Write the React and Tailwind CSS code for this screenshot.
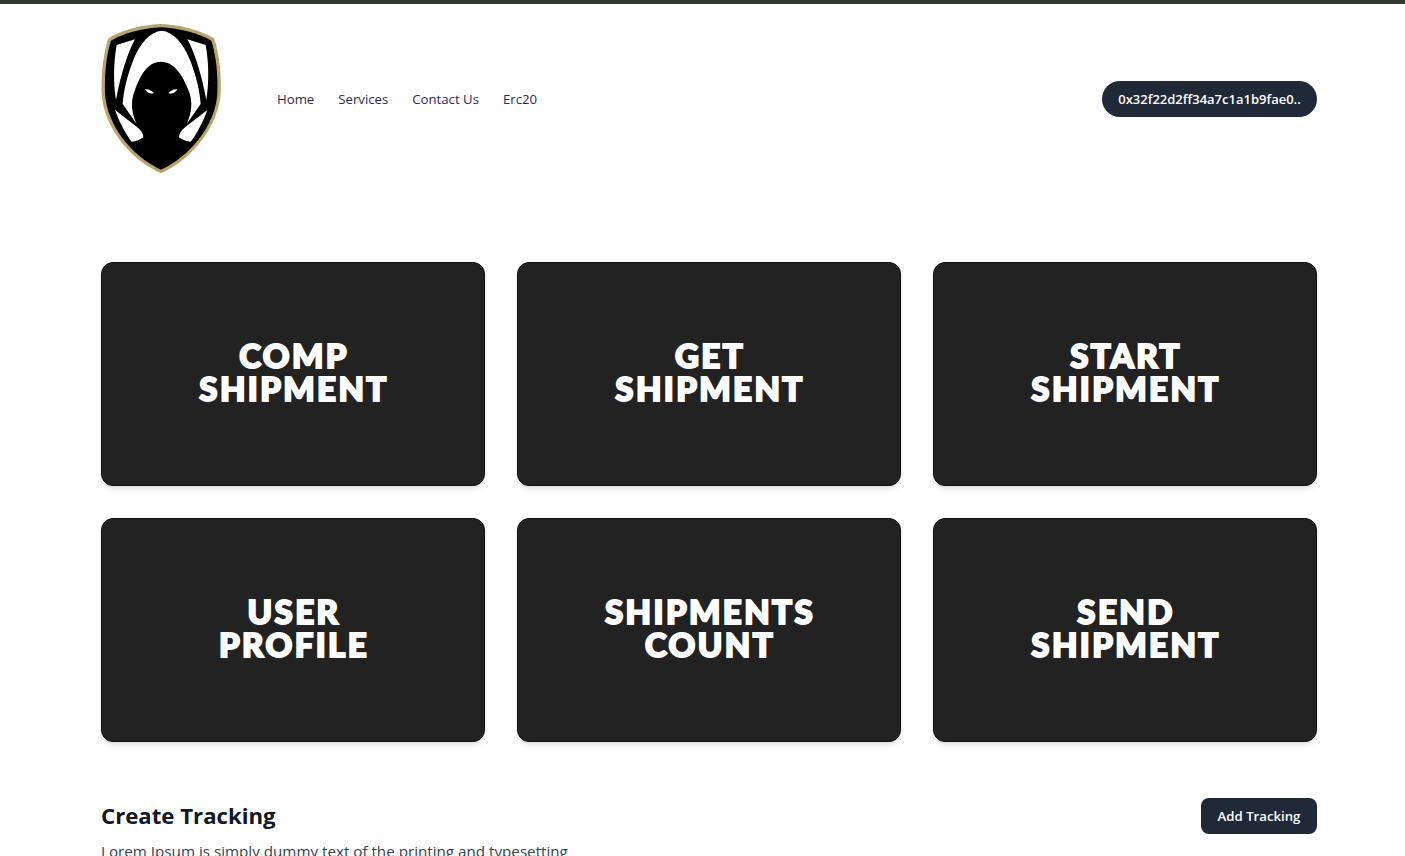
import React from "react";

const cards = [
  ["COMP", "SHIPMENT"],
  ["GET", "SHIPMENT"],
  ["START", "SHIPMENT"],
  ["USER", "PROFILE"],
  ["SHIPMENTS", "COUNT"],
  ["SEND", "SHIPMENT"],
];

function Logo() {
  return (
    <svg viewBox="33 42 360 450" className="w-[120px] h-[150px] shrink-0">
      <path
        d="M213 42C150 45 95 60 55 85C40 130 33 190 35 250C40 350 120 450 213 490C305 450 385 350 392 250C394 190 388 130 372 85C330 60 275 45 213 42Z"
        fill="#b9a46e"
      />
      <path
        d="M213 52C155 55 103 69 63 92C49 135 43 190 45 250C50 345 125 440 213 479C300 440 377 345 382 250C384 190 378 135 364 92C323 69 271 55 213 52Z"
        fill="#000"
      />
      <path
        d="M215 62C180 65 150 100 130 150C112 195 100 245 98 282L140 342C125 310 120 275 135 240C150 200 170 155 213 155C255 155 280 200 295 240C310 275 305 310 290 342L332 282C330 245 318 195 300 150C280 100 250 65 215 62Z"
        fill="#fff"
      />
      <path d="M80 105L135 88C112 130 92 195 78 270C70 220 70 160 80 105Z" fill="#fff" />
      <path d="M347 105L292 88C315 130 335 195 349 270C357 220 357 160 347 105Z" fill="#fff" />
      <path d="M75 300L140 350C152 360 160 370 160 382C150 390 135 395 125 395C105 370 88 335 75 300Z" fill="#fff" />
      <path d="M352 300L287 350C275 360 267 370 267 382C277 390 292 395 302 395C322 370 339 335 352 300Z" fill="#fff" />
      <path d="M165 238C175 236 185 242 192 249C182 253 172 250 165 238Z" fill="#fff" />
      <path d="M262 238C252 236 242 242 235 249C245 253 255 250 262 238Z" fill="#fff" />
    </svg>
  );
}

export default function App() {
  return (
    <div className="h-screen overflow-hidden bg-white font-['Open_Sans','Noto_Sans',sans-serif] border-t-4 border-[#2f3a2e]">
      <div className="ml-[101px] w-[1216px]">
        <header className="flex items-center justify-between pt-5">
          <div className="flex items-center gap-14">
            <Logo />
            <nav className="flex items-center gap-6 pt-px text-[13.2px] text-[#2e2a4f]">
              <a>Home</a>
              <a>Services</a>
              <a>Contact Us</a>
              <a>Erc20</a>
            </nav>
          </div>
          <button className="h-9 w-[215px] rounded-full bg-[#1f2937] pt-px text-white text-[13px] font-semibold">
            0x32f22d2ff34a7c1a1b9fae0..
          </button>
        </header>

        <div className="grid grid-cols-3 gap-8 mt-[88px]">
          {cards.map((card) => (
            <div
              key={card.join(" ")}
              className="h-[224px] rounded-xl bg-[#222222] border border-[#111111] shadow-md flex flex-col items-center justify-center pb-1 pl-[2px] text-white font-['Lato',sans-serif] font-black text-[33px] leading-[33px] tracking-[2.4px] [-webkit-text-stroke:2px_white]"
            >
              <span>{card[0]}</span>
              <span>{card[1]}</span>
            </div>
          ))}
        </div>

        <div className="flex items-start justify-between mt-14">
          <div>
            <h2 className="text-[22.2px] font-bold text-[#111827] leading-9">Create Tracking</h2>
            <p className="mt-1.5 text-[15.2px] text-[#374151]">
              Lorem Ipsum is simply dummy text of the printing and typesetting
            </p>
          </div>
          <button className="h-9 w-[116px] rounded-lg bg-[#1f2937] pt-px text-white text-[13.2px] font-semibold">
            Add Tracking
          </button>
        </div>
      </div>
    </div>
  );
}
